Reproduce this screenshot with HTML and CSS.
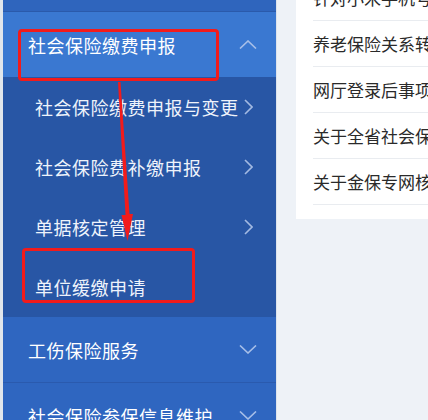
FILE: index.html
```html
<!DOCTYPE html>
<html lang="zh-CN">
<head>
  <meta charset="UTF-8">
  <meta name="viewport" content="width=device-width, initial-scale=1.0">
  <title>社会保险缴费申报</title>
  <link rel="stylesheet" href="styles.css">
</head>
<body>

  <div class="page">
    <aside class="sidebar">
      <div class="menu-top"></div>

      <div class="menu-item active">
        <span>社会保险缴费申报</span>
        <svg class="chevron-v" viewBox="0 0 18 9"><polyline points="1,8.5 9,1 17,8.5"/></svg>
      </div>

      <ul class="submenu">
        <li>
          <span>社会保险缴费申报与变更</span>
          <svg class="chevron-h" viewBox="0 0 9 16"><polyline points="1,1 8,8 1,15"/></svg>
        </li>
        <li>
          <span>社会保险费补缴申报</span>
          <svg class="chevron-h" viewBox="0 0 9 16"><polyline points="1,1 8,8 1,15"/></svg>
        </li>
        <li>
          <span>单据核定管理</span>
          <svg class="chevron-h" viewBox="0 0 9 16"><polyline points="1,1 8,8 1,15"/></svg>
        </li>
        <li>
          <span>单位缓缴申请</span>
        </li>
      </ul>

      <div class="menu-item">
        <span>工伤保险服务</span>
        <svg class="chevron-v" viewBox="0 0 18 9"><polyline points="1,0.5 9,8 17,0.5"/></svg>
      </div>
      <div class="menu-item">
        <span>社会保险参保信息维护</span>
        <svg class="chevron-v" viewBox="0 0 18 9"><polyline points="1,0.5 9,8 17,0.5"/></svg>
      </div>
    </aside>

    <main class="content">
      <div class="card">
        <ul class="news">
          <li>针对小米手机号码无法登录的说明</li>
          <li>养老保险关系转移接续办理指南</li>
          <li>网厅登录后事项办理流程说明</li>
          <li>关于全省社会保险网上经办的通知</li>
          <li>关于金保专网核心系统升级的公告</li>
        </ul>
      </div>
    </main>

    <!-- annotations drawn over the menu -->
    <div class="mark mark-head"></div>
    <div class="mark mark-sub"></div>
    <svg class="arrow" viewBox="0 0 428 420">
      <polygon points="118,82 120.5,82 129.5,214 133,214 127.5,241 121.5,215 125.5,215"/>
    </svg>
  </div>

</body>
</html>
```

FILE: styles.css
```css
body {
  margin: 0;
  font-family: "Noto Sans CJK SC", "Microsoft YaHei", sans-serif;
  background-color: #eef2f7;
  overflow: hidden;
}

.page {
  position: relative;
  display: flex;
  width: 428px;
  height: 420px;
  overflow: hidden;
}

.sidebar {
  width: 273px;
  flex-shrink: 0;
  border-left: 3px solid #e1e6ec;
  border-right: 1px solid #dde4ec;
  background-color: #2f66bf;
  color: #ffffff;
}

.menu-top {
  height: 11px;
  background-color: #2f65bd;
  border-bottom: 1px solid #2a5aab;
}

.menu-item {
  height: 65px;
  display: flex;
  align-items: center;
  justify-content: space-between;
  padding: 0 19px 0 25px;
  font-size: 18px;
  letter-spacing: 0.5px;
  background-color: #2f66c0;
  border-bottom: 1px solid #2a5aae;
  white-space: nowrap;
}

.menu-item.active {
  background-color: #3a78d1;
  border-bottom: none;
}

.chevron-v {
  width: 18px;
  height: 9px;
  flex-shrink: 0;
  fill: none;
  stroke: #a7bfe8;
  stroke-width: 1.6;
}

.submenu {
  list-style: none;
  margin: 0;
  padding: 0;
  background-color: #2856a5;
}

.submenu li {
  height: 60px;
  display: flex;
  align-items: center;
  justify-content: space-between;
  padding: 0 23px 0 32px;
  font-size: 18px;
  letter-spacing: 0.5px;
  color: #eef3fb;
  white-space: nowrap;
}

.chevron-h {
  width: 9px;
  height: 16px;
  flex-shrink: 0;
  fill: none;
  stroke: #a3b9e2;
  stroke-width: 1.6;
}

.content {
  flex: 1;
  padding-left: 19px;
  min-width: 0;
}

.card {
  display: flow-root;
  background-color: #ffffff;
  width: 300px;
  height: 219px;
  padding-left: 17px;
}

.news {
  list-style: none;
  margin: -25px 0 0 0;
  padding: 0;
}

.news li {
  height: 45px;
  line-height: 45px;
  font-size: 17px;
  color: #2a2a2a;
  white-space: nowrap;
  overflow: hidden;
  border-bottom: 1px solid #e9ecf0;
}

.mark {
  position: absolute;
  border: 3px solid #f21b1b;
  border-radius: 4px;
}

.mark-head {
  left: 18px;
  top: 29px;
  width: 195px;
  height: 46px;
}

.mark-sub {
  left: 22px;
  top: 248px;
  width: 167px;
  height: 49px;
}

.arrow {
  position: absolute;
  left: 0;
  top: 0;
  width: 428px;
  height: 420px;
  fill: #f21b1b;
}
```
